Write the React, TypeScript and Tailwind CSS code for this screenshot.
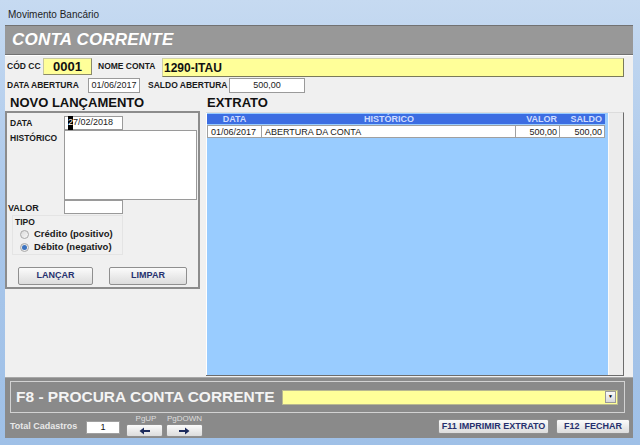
import React from 'react';

const lbl = "text-[8.5px] font-bold text-[#1a1a1a] whitespace-nowrap";

function Btn({ children, className = '' }: { children: React.ReactNode; className?: string }) {
  return (
    <div
      className={`flex items-center justify-center border border-[#8f8f8f] rounded-[2px] bg-gradient-to-b from-[#fbfbfb] to-[#dcdcdc] text-[9px] font-bold text-[#26306e] ${className}`}
    >
      {children}
    </div>
  );
}

function Radio({ checked, label }: { checked?: boolean; label: string }) {
  return (
    <div className="flex items-center h-[13px] pl-[7px] gap-[5px]">
      <div className="w-[9px] h-[9px] rounded-full border border-[#a8a8a8] bg-gradient-to-br from-[#dadada] to-[#f8f8f8] flex items-center justify-center">
        {checked && <div className="w-[5px] h-[5px] rounded-full bg-[#3b73c0]" />}
      </div>
      <span className="text-[9.5px] font-bold text-[#1a1a1a]">{label}</span>
    </div>
  );
}

function Arrow({ dir }: { dir: 'left' | 'right' }) {
  return (
    <svg width="11" height="8" viewBox="0 0 11 8" className={dir === 'right' ? '' : 'rotate-180'}>
      <path d="M0 3h6V0.5L10.5 4 6 7.5V5H0z" fill="#1d2b5c" />
    </svg>
  );
}

export default function App() {
  return (
    <div className="w-[640px] h-[445px] overflow-hidden flex flex-col bg-gradient-to-b from-[#c6daf1] via-[#a8c6ea] to-[#9fc0e7] font-['Liberation_Sans',Arial,sans-serif]">
      {/* Title bar */}
      <div className="h-[25px] pl-[8px] pt-[4px] flex items-center text-[10px] text-[#1e1e1e]">Movimento Bancário</div>

      {/* Client area */}
      <div className="ml-[5px] mr-[7px] h-[413px] bg-[#f0f0f0] flex flex-col">
        {/* Header */}
        <div className="h-[30px] bg-[#989898] border-t border-b border-[#727272] flex items-center pl-[7px]">
          <span className="text-[17px] font-bold italic text-white tracking-[0.2px]">CONTA CORRENTE</span>
        </div>
        <div className="h-[1px] bg-white" />

        {/* Row 1 */}
        <div className="h-[22px] flex items-start pt-[2px] pl-[2px]">
          <span className={`${lbl} leading-[17px] w-[36px]`}>CÓD CC</span>
          <div className="w-[49px] h-[17px] bg-[#ffff99] border border-[#c8c8a0] border-b-[#8a8a6a] border-r-[#8a8a6a] flex items-center justify-center text-[13px] font-bold text-[#111]">
            0001
          </div>
          <span className={`${lbl} leading-[17px] ml-[6px] w-[64px]`}>NOME CONTA</span>
          <div className="w-[462px] h-[19px] bg-[#ffff99] border border-[#d0d0a8] border-b-[#7a7a5a] border-r-[#7a7a5a] flex items-center pl-[1px] text-[12px] font-bold text-[#111]">
            1290-ITAU
          </div>
        </div>

        {/* Row 2 */}
        <div className="h-[16px] flex items-start pl-[2px]">
          <span className={`${lbl} leading-[15px] w-[81px]`}>DATA ABERTURA</span>
          <div className="w-[52px] h-[15px] bg-white border border-[#9a9a9a] flex items-center justify-center text-[9px] text-[#222]">
            01/06/2017
          </div>
          <span className={`${lbl} leading-[15px] ml-[8px] w-[81px]`}>SALDO ABERTURA</span>
          <div className="w-[76px] h-[15px] bg-white border border-[#9a9a9a] flex items-center justify-center text-[9px] text-[#222]">
            500,00
          </div>
        </div>

        {/* Middle */}
        <div className="h-[283px] flex">
          {/* Novo lançamento */}
          <div className="w-[195px] flex flex-col">
            <div className="h-[17px] pl-[5px] flex items-center text-[13px] font-bold text-[#111]">NOVO LANÇAMENTO</div>
            <div className="h-[178px] border-2 border-[#8c8c8c] flex flex-col">
              <div className="flex mt-[3px] h-[14px]">
                <span className={`${lbl} w-[57px] pl-[3px] leading-[14px]`}>DATA</span>
                <div className="w-[59px] h-[14px] bg-white border border-[#9a9a9a] flex items-center pl-[3px] text-[9px] text-[#222]">
                  <span className="bg-black text-white">2</span>7/02/2018
                </div>
              </div>
              <div className="flex h-[70px]">
                <span className={`${lbl} w-[57px] pl-[3px] pt-[2px]`}>HISTÓRICO</span>
                <div className="w-[133px] h-[70px] bg-white border border-[#9a9a9a]" />
              </div>
              <div className="flex h-[14px]">
                <span className={`${lbl} w-[57px] pl-[1px] pt-[2px] text-[9px]`}>VALOR</span>
                <div className="w-[59px] h-[14px] bg-white border border-[#9a9a9a]" />
              </div>
              <div className="ml-[5px] mt-[1px] w-[111px] h-[40px] border border-[#e4e4e4] flex flex-col">
                <span className={`${lbl} pl-[2px] leading-[12px]`}>TIPO</span>
                <Radio label="Crédito (positivo)" />
                <Radio checked label="Débito (negativo)" />
              </div>
              <div className="flex mt-[12px] ml-[11px] gap-[16px]">
                <Btn className="w-[75px] h-[18px]">LANÇAR</Btn>
                <Btn className="w-[78px] h-[18px]">LIMPAR</Btn>
              </div>
            </div>
          </div>

          {/* Extrato */}
          <div className="flex-1 flex flex-col">
            <div className="h-[18px] pl-[7px] flex items-center text-[13px] font-bold text-[#111]">EXTRATO</div>
            <div className="ml-[6px] w-[418px] h-[264px] flex border-r border-b border-[#6c6c6c] border-t border-t-[#dcdcdc]">
              <div className="w-[402px] bg-[#99ccff] border-l border-white pt-[1px]">
                <div className="w-[398px] h-[10px] bg-[#3c6de2] flex text-[9px] font-bold text-[#cfdcff] leading-[10px]">
                  <span className="w-[55px] text-center">DATA</span>
                  <span className="w-[254px] text-center">HISTÓRICO</span>
                  <span className="w-[44px] text-right pr-[3px]">VALOR</span>
                  <span className="w-[45px] text-right pr-[3px]">SALDO</span>
                </div>
                <div className="w-[398px] h-[13px] mt-[1px] flex text-[9px] text-[#1a1a1a] leading-[12px]">
                  <span className="w-[55px] bg-white border border-[#a0a0a0] pl-[3px]">01/06/2017</span>
                  <span className="w-[254px] bg-white border-y border-r border-[#a0a0a0] pl-[3px]">ABERTURA DA CONTA</span>
                  <span className="w-[44px] bg-white border-y border-r border-[#a0a0a0] text-right pr-[2px]">500,00</span>
                  <span className="w-[45px] bg-white border-y border-r border-[#a0a0a0] text-right pr-[2px]">500,00</span>
                </div>
              </div>
              <div className="flex-1 bg-[#ececec] border-l border-[#fafafa]" />
            </div>
          </div>
        </div>

        {/* Bottom */}
        <div className="h-[61px] bg-[#8a8a8a] border-t border-[#a8a8a8] flex flex-col">
          <div className="ml-[5px] mt-[3px] w-[615px] h-[32px] border border-[#d2d2d2] flex items-center pl-[5px]">
            <span className="text-[15.5px] font-bold text-[#f4f4f4] w-[266px] whitespace-nowrap">F8 - PROCURA CONTA CORRENTE</span>
            <div className="w-[336px] h-[15px] bg-[#ffff99] border border-[#b8b890] flex justify-end items-center pr-[1px]">
              <div className="w-[11px] h-[12px] bg-gradient-to-b from-[#fafafa] to-[#d8d8d8] border border-[#9a9a9a] flex items-center justify-center text-[5px] text-black">▼</div>
            </div>
          </div>
          <div className="flex-1 flex items-end pb-[1px] pl-[5px]">
            <span className="text-[9px] font-bold text-[#e8e8e8] w-[76px] mb-[4px]">Total Cadastros</span>
            <div className="w-[34px] h-[13px] bg-white border border-[#a0a0a0] flex items-center justify-center text-[9px] text-[#111] mb-[3px]">1</div>
            <div className="ml-[6px] flex flex-col">
              <div className="flex text-[8px] text-[#dedede] h-[9px] leading-[9px]">
                <span className="w-[40px] text-center">PgUP</span>
                <span className="w-[37px] text-center">PgDOWN</span>
              </div>
              <div className="flex gap-[3px] mt-[1px]">
                <Btn className="w-[37px] h-[13px]"><Arrow dir="left" /></Btn>
                <Btn className="w-[37px] h-[13px]"><Arrow dir="right" /></Btn>
              </div>
            </div>
            <div className="flex-1" />
            <Btn className="w-[111px] h-[15px] text-[8.5px] mb-[3px]">F11 IMPRIMIR EXTRATO</Btn>
            <Btn className="w-[74px] h-[15px] text-[8.5px] ml-[7px] mr-[3px] mb-[3px]">F12&nbsp; FECHAR</Btn>
          </div>
        </div>
      </div>
    </div>
  );
}
